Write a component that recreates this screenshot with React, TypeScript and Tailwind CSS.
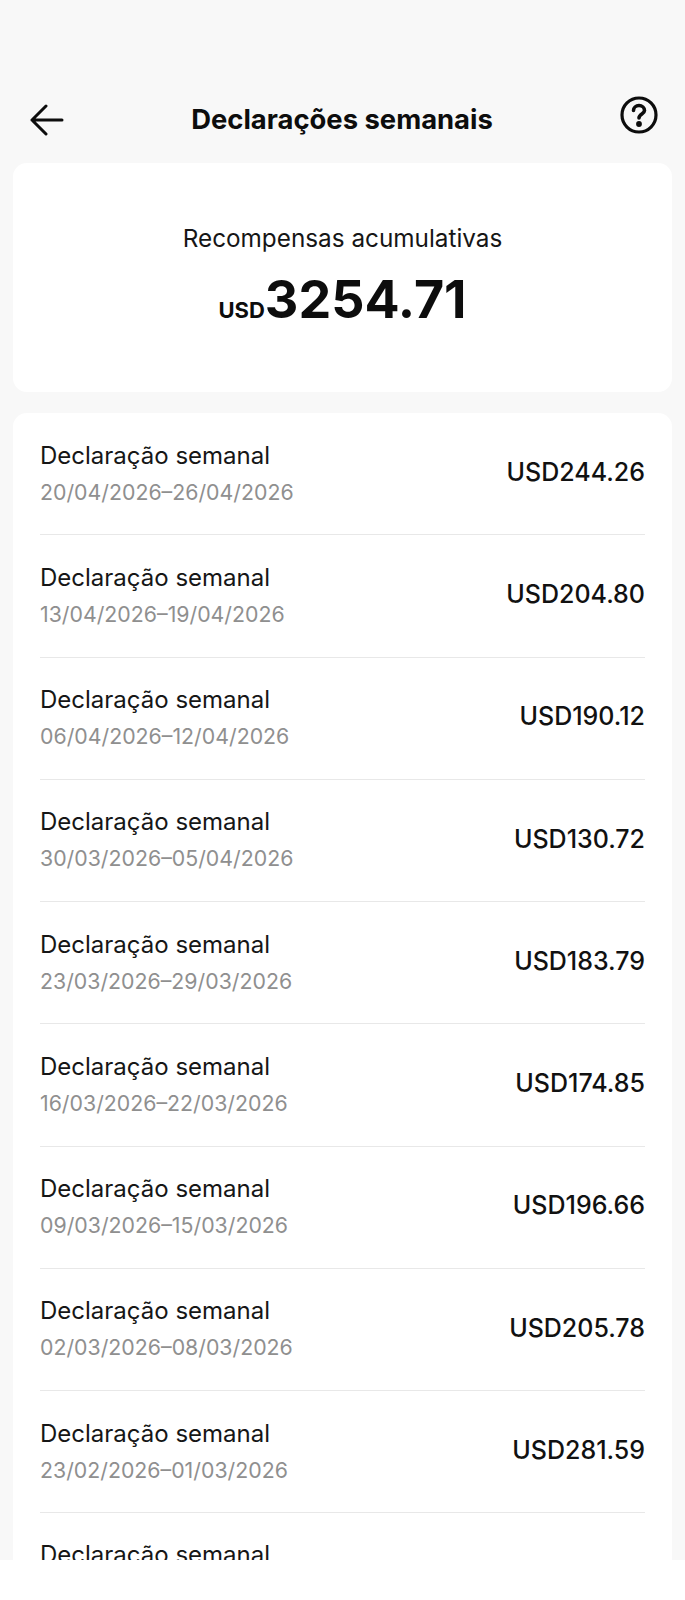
const rows = [
  ["20/04/2026–26/04/2026", "USD244.26"],
  ["13/04/2026–19/04/2026", "USD204.80"],
  ["06/04/2026–12/04/2026", "USD190.12"],
  ["30/03/2026–05/04/2026", "USD130.72"],
  ["23/03/2026–29/03/2026", "USD183.79"],
  ["16/03/2026–22/03/2026", "USD174.85"],
  ["09/03/2026–15/03/2026", "USD196.66"],
  ["02/03/2026–08/03/2026", "USD205.78"],
  ["23/02/2026–01/03/2026", "USD281.59"],
];

function Row({ date, amount }: { date: string; amount: string }) {
  return (
    <div className="mx-[27px] h-[122.25px] border-b border-[#e8e8e8] flex items-center justify-between">
      <div>
        <div className="text-[24px] leading-[36px] text-[#161616]">Declaração semanal</div>
        <div className="text-[21.3px] leading-[36px] text-[#8f8f8f]">{date}</div>
      </div>
      <div className="text-[25px] font-medium text-[#111] pb-[2px]">{amount}</div>
    </div>
  );
}

export default function App() {
  return (
    <div className="relative h-[1600px] bg-white overflow-hidden font-['Inter',sans-serif]">
      <div className="h-[1560px] bg-[#f8f8f8] overflow-hidden">
        <div className="h-[163px] pt-[88px] px-[30px] flex items-start justify-between">
          <svg width="34" height="34" viewBox="0 0 34 34" fill="none" stroke="#0d0d0d" strokeWidth="3" strokeLinecap="round" strokeLinejoin="round" className="mt-[15px]">
            <path d="M2 17h30M16 3 2 17l14 14" />
          </svg>
          <h1 className="text-[27.4px] font-bold text-[#0d0d0d] leading-[62px]">Declarações semanais</h1>
          <svg width="38" height="38" viewBox="0 0 38 38" fill="none" stroke="#0d0d0d" strokeWidth="3.2" strokeLinecap="round" className="mt-[8px] mr-[-3px]">
            <circle cx="19" cy="19" r="17" />
            <path d="M13.5 14.5a5.5 5 0 0 1 11 0c0 3.5-5.5 3.5-5.5 7.5" strokeWidth="3.6" />
            <circle cx="19" cy="28" r="1.3" fill="#0d0d0d" />
          </svg>
        </div>
        <div className="mx-[13px] h-[229px] bg-white rounded-[14px] flex flex-col items-center pt-[58px]">
          <div className="text-[24.3px] leading-[34px] text-[#161616]">Recompensas acumulativas</div>
          <div className="flex items-baseline mt-[11px] font-bold text-[#0d0d0d]">
            <span className="text-[22px]">USD</span>
            <span className="text-[52px] leading-[68px]">3254.71</span>
          </div>
        </div>
        <div className="mx-[13px] mt-[21px] bg-white rounded-t-[14px]">
          {rows.map((r) => (
            <Row key={r[0]} date={r[0]} amount={r[1]} />
          ))}
          <div className="mx-[27px] pt-[24px] text-[24px] leading-[36px] text-[#161616]">Declaração semanal</div>
        </div>
      </div>
    </div>
  );
}
